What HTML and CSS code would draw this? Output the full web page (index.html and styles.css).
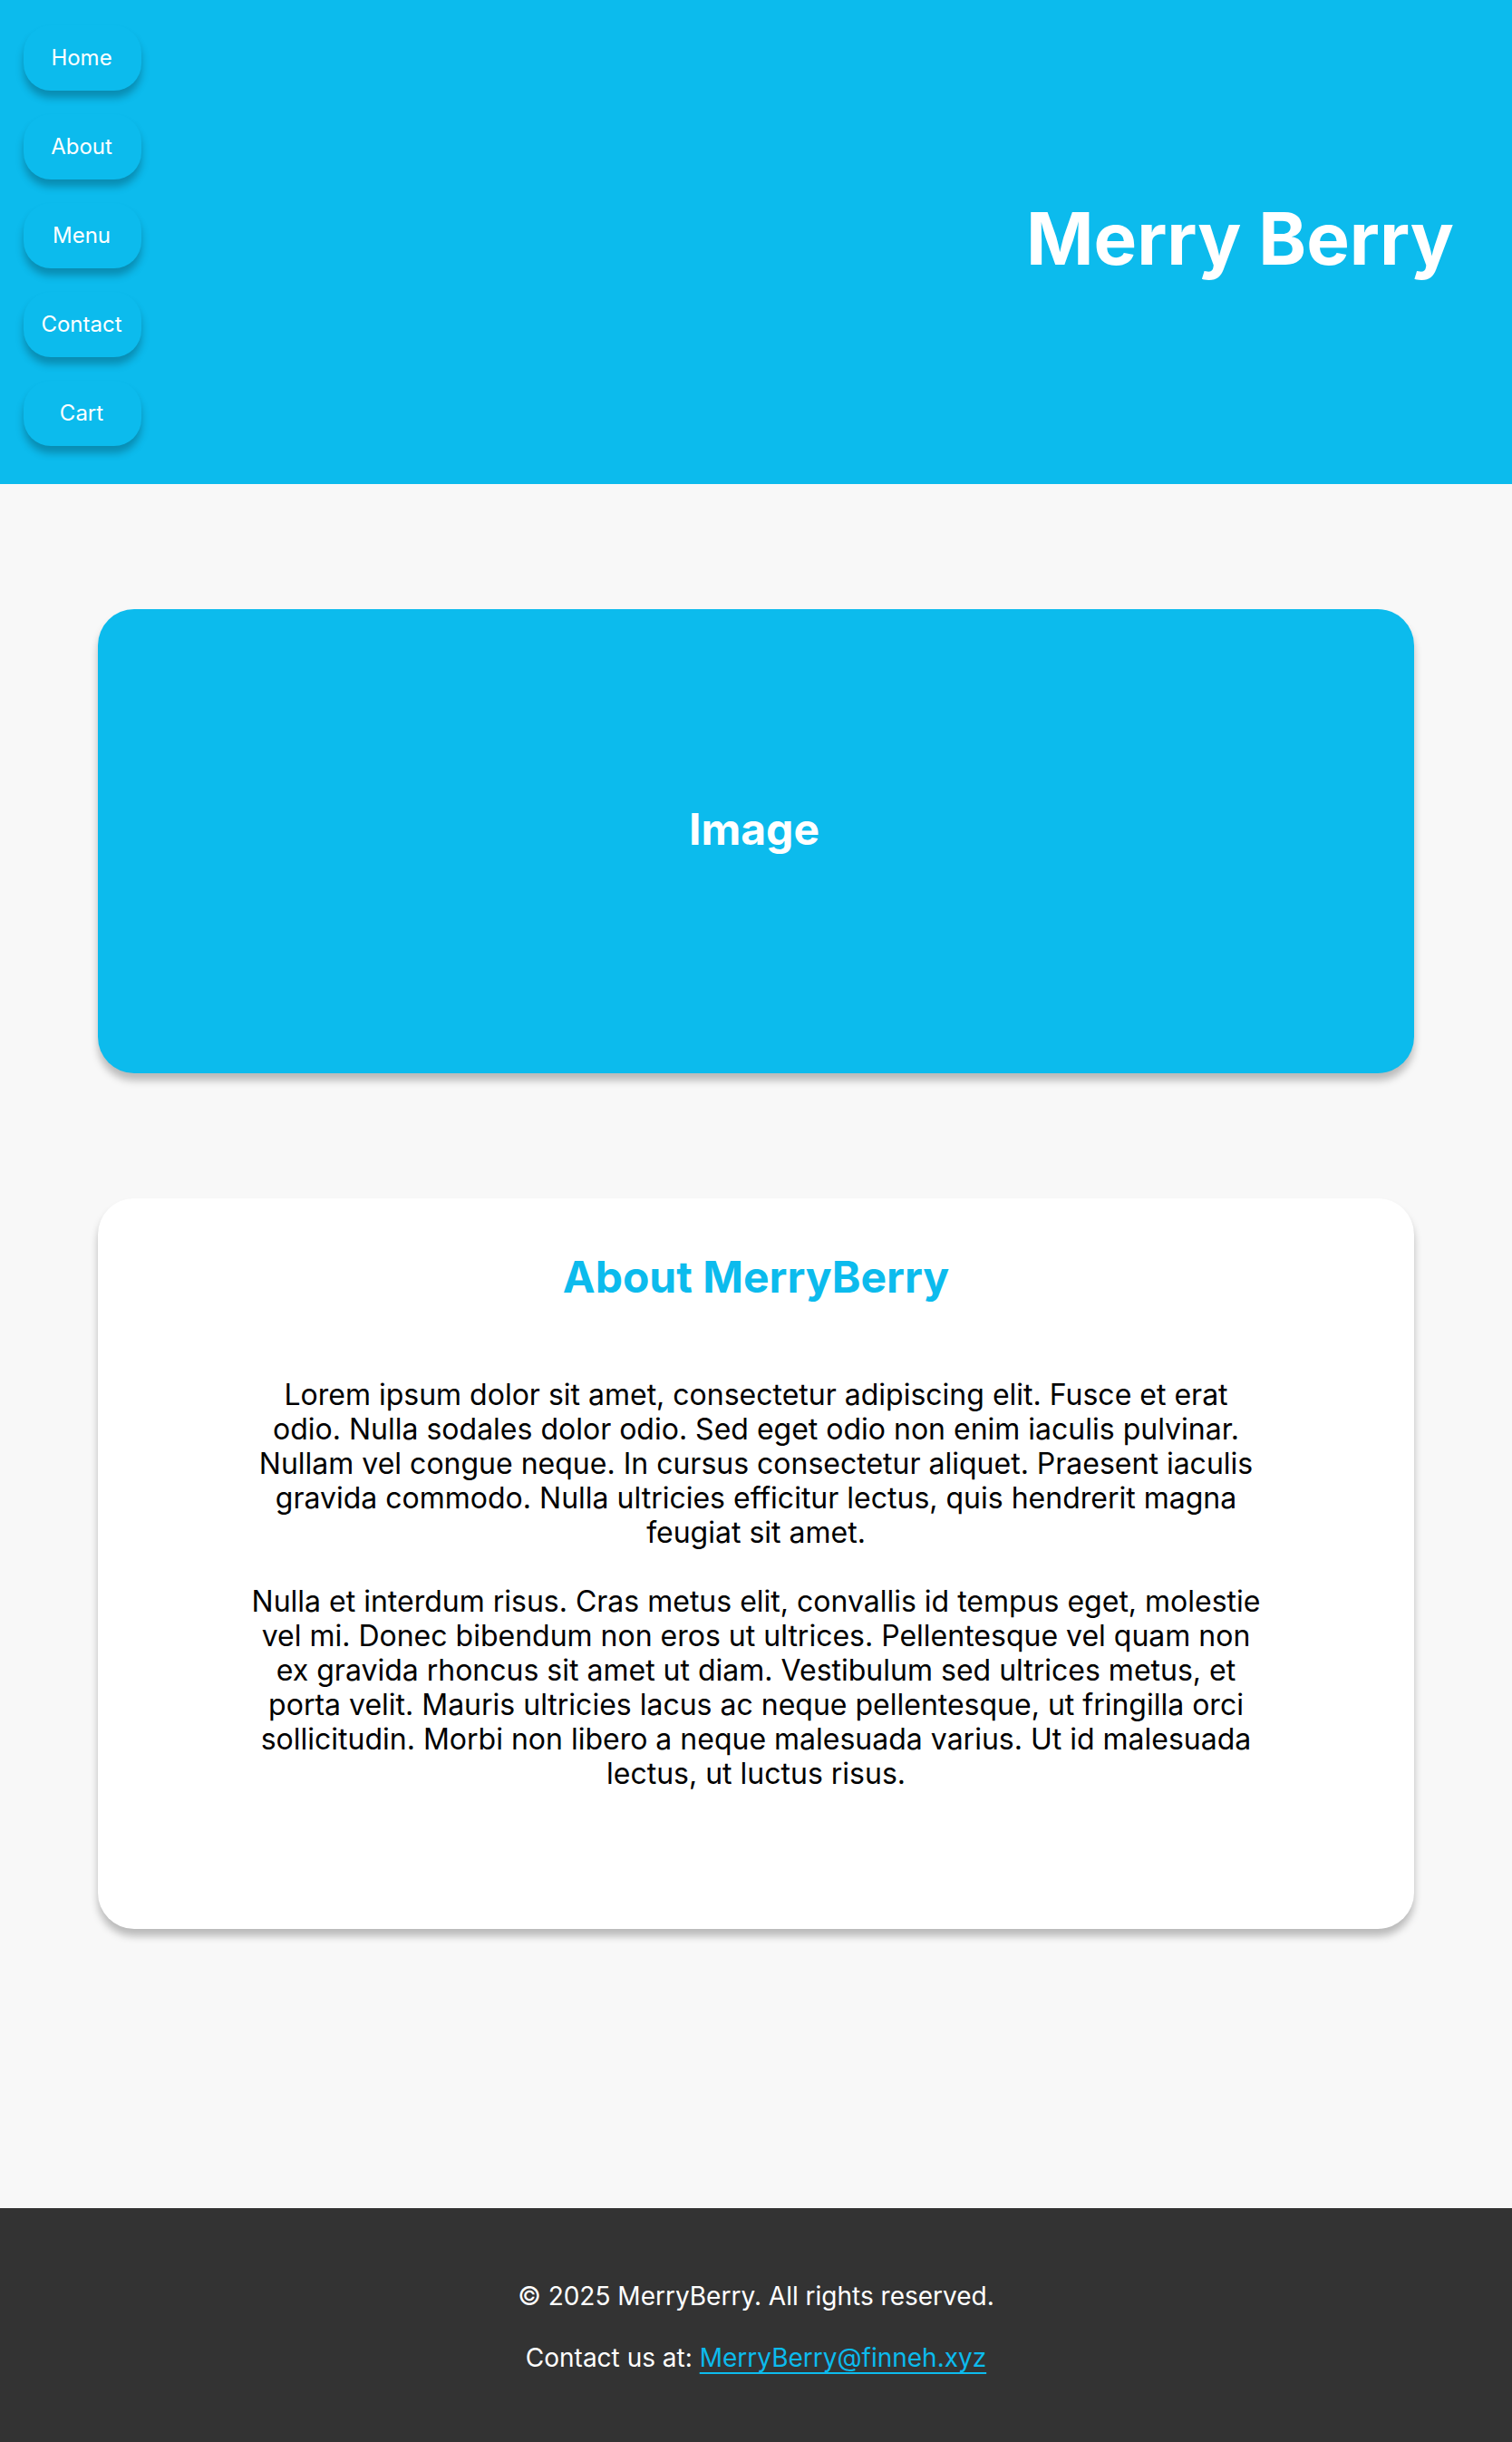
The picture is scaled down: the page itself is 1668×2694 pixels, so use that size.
FILE: index.html
```html
<!DOCTYPE html>
<html lang="en">
<head>
<meta charset="utf-8">
<meta name="viewport" content="width=device-width, initial-scale=1">
<title>Merry Berry</title>
<link rel="stylesheet" href="styles.css">
</head>
<body>
<header class="site-header">
  <nav class="nav" aria-label="Main">
    <a class="nav-link" href="#home">Home</a>
    <a class="nav-link" href="#about">About</a>
    <a class="nav-link" href="#menu">Menu</a>
    <a class="nav-link" href="#contact">Contact</a>
    <a class="nav-link" href="#cart">Cart</a>
  </nav>
  <h1 class="brand">Merry Berry</h1>
</header>
<main class="content">
  <section class="card hero" id="home">
    <h2 class="card-title">Image</h2>
  </section>
  <section class="card about" id="about">
    <h2 class="card-title">About MerryBerry</h2>
    <div class="about-text">
      <p>Lorem ipsum dolor sit amet, consectetur adipiscing elit. Fusce et erat odio. Nulla sodales dolor odio. Sed eget odio non enim iaculis pulvinar. Nullam vel congue neque. In cursus consectetur aliquet. Praesent iaculis gravida commodo. Nulla ultricies efficitur lectus, quis hendrerit magna feugiat sit amet.</p>
      <p>Nulla et interdum risus. Cras metus elit, convallis id tempus eget, molestie vel mi. Donec bibendum non eros ut ultrices. Pellentesque vel quam non ex gravida rhoncus sit amet ut diam. Vestibulum sed ultrices metus, et porta velit. Mauris ultricies lacus ac neque pellentesque, ut fringilla orci sollicitudin. Morbi non libero a neque malesuada varius. Ut id malesuada lectus, ut luctus risus.</p>
    </div>
  </section>
</main>
<footer class="site-footer" id="contact">
  <p>© 2025 MerryBerry. All rights reserved.</p>
  <p>Contact us at: <a class="mail" href="mailto:MerryBerry@finneh.xyz">MerryBerry@finneh.xyz</a></p>
</footer>
</body>
</html>
```
FILE: styles.css
```css
* { box-sizing: border-box; }
body { margin: 0; background: #f8f8f8; color: #000; font-family: Inter, "Liberation Sans", sans-serif; font-optical-sizing: auto; font-variation-settings: "opsz" 32; }
h1, h2, p { margin: 0; }
.site-header { display: flex; align-items: center; justify-content: space-between; padding: 28px 64px 42px 26px; background: #0cbbed; }
.nav { display: flex; flex-direction: column; gap: 26px; }
.nav-link { display: flex; align-items: center; justify-content: center; width: 130px; height: 72px; padding-right: 2px; border-radius: 30px; color: #fff; font-size: 24px; line-height: 30px; text-decoration: none; background: #0cbbed; box-shadow: 0 8px 8px rgba(0, 0, 0, 0.25); }
.brand { padding-top: 6px; color: #fff; font-size: 80px; line-height: 96px; font-weight: 700; }
.content { display: flex; flex-direction: column; gap: 138px; padding: 138px 108px 308px; }
.card { border-radius: 40px; text-align: center; box-shadow: 0 8px 8px rgba(0, 0, 0, 0.25); }
.card-title { font-size: 48px; line-height: 58px; font-weight: 700; }
.hero { display: flex; align-items: center; justify-content: center; height: 512px; padding: 0 4px 26px 0; background: #0cbbed; color: #fff; }
.about { padding: 58px 168px 152px; background: #fff; }
.about .card-title { color: #0cbbed; }
.about-text { display: flex; flex-direction: column; gap: 38px; margin-top: 82px; font-size: 32px; line-height: 38px; }
.site-footer { display: flex; flex-direction: column; gap: 34px; padding: 80px 32px 76px; background: #333; color: #fff; font-size: 28px; line-height: 34px; text-align: center; }
.mail { color: #0cbbed; text-decoration-thickness: 2px; text-underline-offset: 6px; }
```
